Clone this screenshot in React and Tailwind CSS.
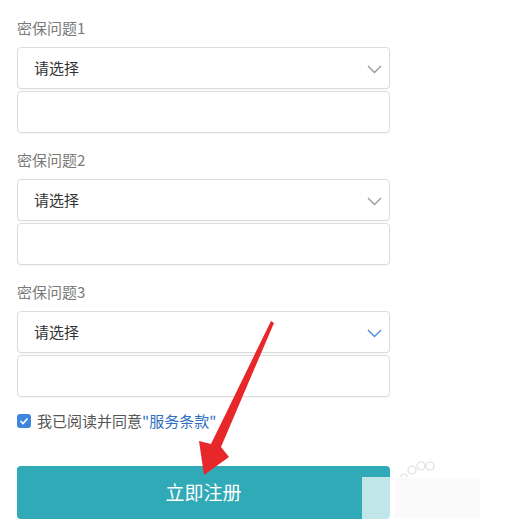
import React from "react";

const font = { fontFamily: '"Noto Sans CJK SC", "Noto Sans", sans-serif' };

function Chevron({ blue }) {
  return (
    <svg width="15" height="9" viewBox="0 0 15 9" className="absolute right-[7px] top-[17px]">
      <path d="M1 1 L7.5 7.5 L14 1" fill="none" stroke={blue ? "#4a8fd6" : "#9a9a9a"} strokeWidth="1.4" />
    </svg>
  );
}

function Group({ label, blue, first }) {
  return (
    <div className={first ? "pt-[19px]" : "pt-[18px]"}>
      <div className="h-[18px] leading-[18px] text-[15px] text-[#7a7a7a]">{label}</div>
      <div className="relative mt-[10px] h-[42px] rounded-[4px] border border-[#dcdcdc] bg-white shadow-[0_1px_1px_rgba(0,0,0,0.04)] flex items-center pl-[16px] text-[15px] text-[#333]">
        请选择
        <Chevron blue={blue} />
      </div>
      <div className="mt-[2px] h-[42px] rounded-[4px] border border-[#dcdcdc] bg-white shadow-[0_1px_1px_rgba(0,0,0,0.04)]" />
    </div>
  );
}

export default function App() {
  return (
    <div className="relative w-[510px] h-[523px] bg-white overflow-hidden" style={font}>
      <div className="ml-[17px] w-[373px]">
        <Group label="密保问题1" first />
        <Group label="密保问题2" />
        <Group label="密保问题3" blue />

        <div className="mt-[15px] h-[18px] flex items-center gap-[6px] text-[15px] text-[#555]">
          <span className="w-[14px] h-[14px] rounded-[3px] bg-[#3e86dd] flex items-center justify-center">
            <svg width="10" height="10" viewBox="0 0 10 10">
              <path d="M1.5 5 L4 7.5 L8.5 2.5" fill="none" stroke="white" strokeWidth="1.6" />
            </svg>
          </span>
          <span>
            我已阅读并同意<span className="text-[#2f6fc0]">"服务条款"</span>
          </span>
        </div>

        <button className="mt-[36px] w-full h-[53px] rounded-[4px] bg-[#30aab7] text-white text-[19px] flex items-center justify-center">
          立即注册
        </button>
      </div>

      <svg className="absolute left-0 top-0 pointer-events-none" width="510" height="523">
        <polygon
          points="271,321 274,323 221,447 229,457 204,475 199,441 211,444"
          fill="#e8272b"
        />
        <g fill="none" stroke="#dedede" strokeWidth="1.2">
          <circle cx="412" cy="470" r="4" />
          <circle cx="421" cy="466" r="4" />
          <circle cx="430" cy="466" r="4" />
          <circle cx="404" cy="477" r="3" />
        </g>
      </svg>
      <div className="absolute left-[362px] top-[477px] w-[118px] h-[46px] bg-white/70" />
      <div className="absolute left-[395px] top-[478px] w-[85px] h-[40px] bg-[#f8f8f8]/70" />
    </div>
  );
}
